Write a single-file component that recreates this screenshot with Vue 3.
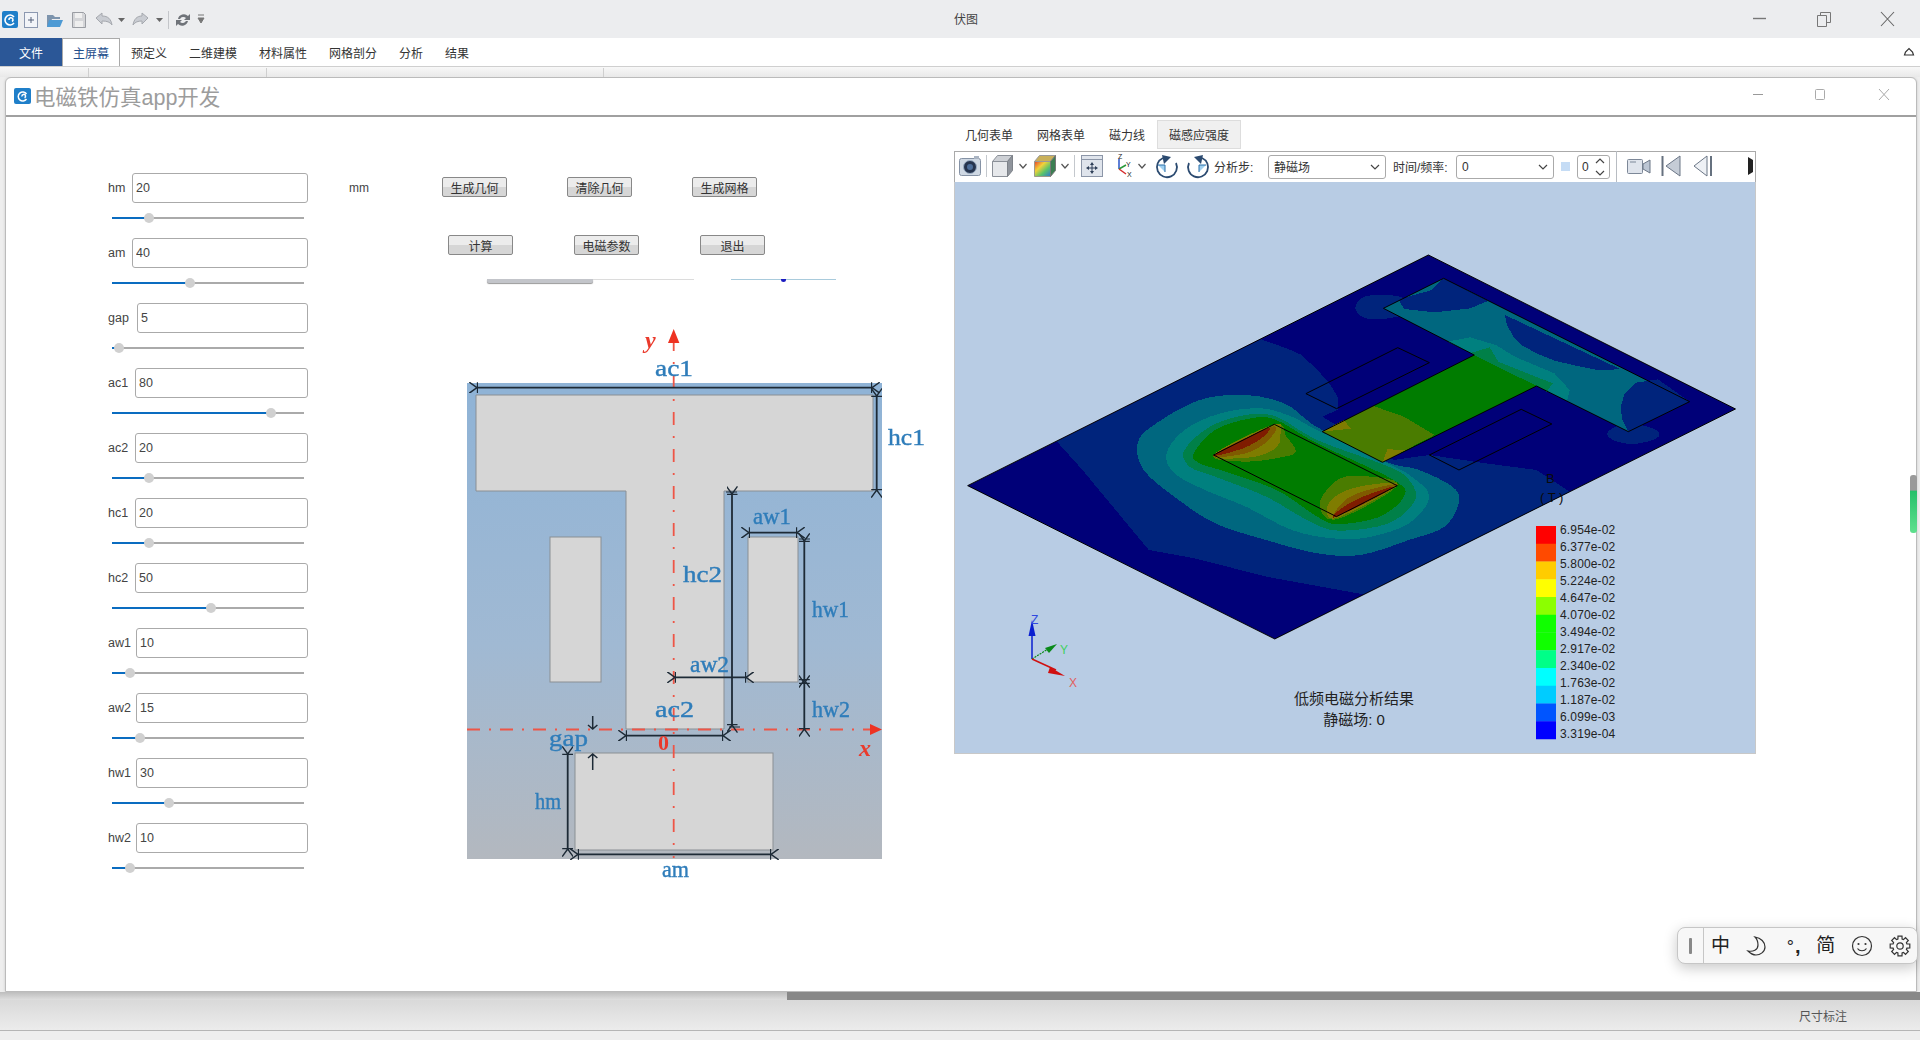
<template>
  <div class="app">
    <!-- title bar -->
    <header class="titlebar">
      <svg class="quick" viewBox="0 0 210 38" width="210" height="38">
        <rect x="2" y="11" width="16" height="17" rx="2" fill="#1f7fc9" />
        <path d="M14 17a5 5 0 1 0 0 6M9 20a2 2 0 1 1 3 1.5" fill="none" stroke="#fff" stroke-width="1.6" />
        <rect x="24.500" y="12.500" width="13" height="15" fill="#f2f4f8" stroke="#8c98b0" />
        <path d="M31 17v6M28 20h6" stroke="#55617a" />
        <path d="M47 15h6l2 2h5v2H52l-3 8h-2z" fill="#7d94ad" />
        <path d="M49 20h14l-3 7H47z" fill="#4d9ad4" />
        <path d="M72.500 12.500h11l2 2v13h-13z" fill="#d4d5d8" stroke="#9a9da3" />
        <rect x="75" y="13" width="7" height="5" fill="#f0f0f0" />
        <rect x="75" y="21" width="8" height="6" fill="#eee" />
        <path d="M96 18l6-5v3c6 0 9 3 10 9-2-3-5-4-10-4v3z" fill="#c9ccd2" stroke="#a5a8ae" />
        <path d="M118 18h7l-3.500 4z" fill="#666" />
        <path d="M148 18l-6-5v3c-5 0-8 3-9 9 2-3 5-4 9-4v3z" fill="#c9ccd2" stroke="#a5a8ae" />
        <path d="M156 18h7l-3.500 4z" fill="#666" />
        <path d="M168.500 11v18" stroke="#c4c6ca" />
        <path d="M178 19a6 6 0 0 1 10-3l2-2v6h-6l2-2a4 4 0 0 0-6 1zM188 21a6 6 0 0 1-10 3l-2 2v-6h6l-2 2a4 4 0 0 0 6-1z" fill="#6f7379" />
        <path d="M198 15h6M198 18h6l-3 5z" fill="#777" stroke="#777" />
      </svg>
      <span class="app-name">伏图</span>
      <div class="win-btns">
        <svg viewBox="0 0 168 38" width="168" height="38">
          <path d="M2 18.500h13" stroke="#777" stroke-width="1.400" />
          <path d="M66.500 15.500h9v11h-9zM69.500 15.500v-3h10v10h-4" fill="none" stroke="#777" />
          <path d="M130 12l13 14M143 12l-13 14" stroke="#666" stroke-width="1.100" />
        </svg>
      </div>
    </header>

    <!-- menu -->
    <nav class="menubar">
      <div class="file-tab">文件</div>
      <div class="home-tab">主屏幕</div>
      <div v-for="m in menus" :key="m" class="menu-item">{{ m }}</div>
      <svg class="collapse" viewBox="0 0 12 12" width="12" height="12">
        <path d="M1.500 9h9l-1-3-3.500-3.500L2.500 6z" fill="none" stroke="#333" stroke-width="1.200" />
      </svg>
    </nav>
    <div class="ribbon">
      <i class="tick t1"></i><i class="tick t2"></i><i class="tick t3"></i>
    </div>

    <!-- app window -->
    <section class="window">
      <div class="win-title">
        <svg viewBox="0 0 18 18" width="18" height="18">
          <rect x="0" y="1" width="17" height="16" rx="2" fill="#1f7fc9" />
          <path d="M12.500 7a4.500 4.500 0 1 0 0 5M8 9.500a1.800 1.800 0 1 1 2.500 1.300" fill="none" stroke="#fff" stroke-width="1.500" />
        </svg>
        <span class="win-name">电磁铁仿真app开发</span>
        <div class="win-btns2">
          <svg viewBox="0 0 140 18" width="140" height="18">
            <path d="M0 9.500h10" stroke="#999" />
            <rect x="62.500" y="4.500" width="9" height="10" rx="1" fill="none" stroke="#aaa" />
            <path d="M126 4l10 11M136 4l-10 11" stroke="#aaa" />
          </svg>
        </div>
      </div>

      <div class="win-body">
        <!-- parameters -->
        <div class="params">
          <div v-for="p in params" :key="p.name" class="param">
            <div class="param-top">
              <label class="param-label" :style="{ width: p.labelW + 'px' }">{{ p.name }}</label>
              <input class="param-input" :value="p.value" readonly />
            </div>
            <div class="slider">
              <div class="slider-fill" :style="{ width: p.pos + 'px' }"></div>
              <div class="slider-thumb" :style="{ left: p.pos - 5 + 'px' }"></div>
            </div>
          </div>
        </div>

        <!-- actions + sketch -->
        <div class="middle">
          <div class="btn-row first">
            <span class="unit">mm</span>
            <button v-for="b in btnsA" :key="b" class="btn">{{ b }}</button>
          </div>
          <div class="btn-row second">
            <button v-for="b in btnsB" :key="b" class="btn">{{ b }}</button>
          </div>
          <div class="cut-strip">
            <div class="cut-bar"></div>
            <div class="cut-line"></div>
            <div class="cut-blue"><i></i></div>
          </div>

          <svg class="sketch" viewBox="450 320 500 570" width="500" height="570">
            <defs>
              <linearGradient id="skbg" x1="0" y1="0" x2="0" y2="1">
                <stop offset="0" stop-color="#8fb3d6" />
                <stop offset="0.55" stop-color="#a0b9d3" />
                <stop offset="1" stop-color="#b3b8bf" />
              </linearGradient>
              <marker id="dimEnd" viewBox="0 0 10 10" refX="1" refY="5" markerWidth="11" markerHeight="11" markerUnits="userSpaceOnUse" orient="auto-start-reverse">
                <path d="M8 0L1 5l7 5M0.500 0v10" fill="none" stroke="#1d2a36" stroke-width="1.300" />
              </marker>
            </defs>
            <g class="soft">
              <rect x="467" y="383" width="415" height="476" fill="url(#skbg)" />
              <path d="M476 395H873V491H724V729H626V491H476Z" fill="#d6d6d6" stroke="#8a8f94" />
              <rect x="550" y="537" width="51" height="145" fill="#d6d6d6" stroke="#8a8f94" />
              <rect x="748" y="537" width="50" height="145" fill="#d6d6d6" stroke="#8a8f94" />
              <rect x="575" y="753" width="198" height="97" fill="#d6d6d6" stroke="#8a8f94" />

              <path d="M673.700 338V858" stroke="#ee5546" stroke-width="1.800" stroke-dasharray="13 11 2 11" fill="none" />
              <path d="M467 729.500H872" stroke="#ee5546" stroke-width="1.800" stroke-dasharray="13 9 2 9" fill="none" />
              <path d="M668 343l5.700-14 5.700 14zM870 724l12 5.500-12 5.500z" fill="#ee3322" />

              <g class="dims">
                <line v-for="(d, i) in dims" :key="i" :x1="d[0]" :y1="d[1]" :x2="d[2]" :y2="d[3]" marker-start="url(#dimEnd)" marker-end="url(#dimEnd)" />
                <path d="M726 492h11M729 727h11M799 539h11" stroke-width="1.200" />
                <path d="M592.700 716v12M588 725l4.700 4 4.700-4M592.700 770v-15M588 758l4.700-4 4.700 4" fill="none" stroke-width="1.500" />
              </g>

              <text v-for="l in sketchLabels" :key="l.t" class="sk-label" :x="l.x" :y="l.y" :textLength="l.w" lengthAdjust="spacingAndGlyphs">{{ l.t }}</text>
              <text class="sk-red" x="645" y="348">y</text>
              <text class="sk-red" x="859" y="756">x</text>
              <text class="sk-zero" x="658" y="750">0</text>
            </g>
          </svg>
        </div>

        <!-- result panel -->
        <div class="result">
          <div class="tabs">
            <span v-for="t in tabs" :key="t" class="tab">{{ t }}</span>
            <span class="tab active">磁感应强度</span>
          </div>

          <div class="toolbar">
            <svg class="tb-left" viewBox="955 151 258 31" width="258" height="31">
              <defs>
                <linearGradient id="rainbow" x1="0" y1="0" x2="1" y2="1">
                  <stop offset="0" stop-color="#e8402a" />
                  <stop offset="0.35" stop-color="#f2d23a" />
                  <stop offset="0.65" stop-color="#59c46a" />
                  <stop offset="1" stop-color="#2f76d6" />
                </linearGradient>
              </defs>
              <rect x="959.500" y="158.500" width="21" height="17" rx="2" fill="#cfd8e3" stroke="#8592a5" />
              <rect x="974" y="156" width="5" height="3" fill="#aab4c2" />
              <circle cx="970" cy="167" r="6.500" fill="#26344e" stroke="#9db0c6" />
              <circle cx="970" cy="167" r="3" fill="#4d6e9a" />
              <path d="M986.500 155v22M1074.500 155v22" stroke="#c4c8cd" />

              <path d="M992.500 161.500h15v15h-15z" fill="#e6e8eb" stroke="#8b9098" />
              <path d="M992.500 161.500l5-6h15l-5 6z" fill="#cdd0d5" stroke="#8b9098" />
              <path d="M1007.500 161.500l5-6v15l-5 6z" fill="#8f949c" stroke="#7d8289" />
              <path d="M1019.500 164l3.500 4 3.500-4M1061.500 164l3.500 4 3.500-4M1138.500 164l3.500 4 3.500-4" fill="none" stroke="#555" stroke-width="1.200" />

              <path d="M1034.500 161.500h16v15h-16z" fill="url(#rainbow)" stroke="#9a9a8a" />
              <path d="M1034.500 161.500l5-6h16l-5 6z" fill="#c9b05a" stroke="#999" />
              <path d="M1050.500 161.500l5-6v15l-5 6z" fill="#3b7e52" stroke="#777" />

              <rect x="1081.500" y="155.500" width="21" height="21" fill="#dfe4ec" stroke="#8c96a8" />
              <path d="M1082 159.500h20" stroke="#8c96a8" />
              <path d="M1092 164v8M1088 168h8" stroke="#2e3f58" />
              <path d="M1092 162l-2 3h4zM1092 174l-2-3h4zM1086 168l3-2v4zM1098 168l-3-2v4z" fill="#2e3f58" />

              <path d="M1119 169v-10" stroke="#2a55c8" stroke-width="1.500" />
              <path d="M1119 169l7-4" stroke="#2a9a3a" stroke-width="1.500" />
              <path d="M1119 169l7 5" stroke="#d62a2a" stroke-width="1.500" />
              <text class="tb-axis" x="1118" y="159">Z</text>
              <text class="tb-axis" x="1126" y="167">Y</text>
              <text class="tb-axis" x="1127" y="177">X</text>

              <path d="M1163 158a10 10 0 1 0 13 5" fill="none" stroke="#2b4a70" stroke-width="1.800" />
              <path d="M1162 155l9 2-7 7z" fill="#2b4a70" />
              <path d="M1158 165h7v7" fill="#9fd0f0" stroke="#2b6ea8" />
              <path d="M1202 158a10 10 0 1 1-13 5" fill="none" stroke="#2b4a70" stroke-width="1.800" />
              <path d="M1203 155l-9 2 7 7z" fill="#2b4a70" />
              <path d="M1206 165h-7v7" fill="#9fd0f0" stroke="#2b6ea8" />
            </svg>
            <span class="tb-text step-label">分析步:</span>
            <div class="combo combo-a"><span>静磁场</span><svg viewBox="0 0 10 6" width="10" height="6"><path d="M1 1l4 4 4-4" fill="none" stroke="#444" stroke-width="1.200" /></svg></div>
            <span class="tb-text freq-label">时间/频率:</span>
            <div class="combo combo-b"><span>0</span><svg viewBox="0 0 10 6" width="10" height="6"><path d="M1 1l4 4 4-4" fill="none" stroke="#444" stroke-width="1.200" /></svg></div>
            <i class="blue-sq"></i>
            <div class="spin">
              <span>0</span>
              <svg viewBox="0 0 10 22" width="10" height="22"><path d="M1 7l4-4 4 4M1 15l4 4 4-4" fill="none" stroke="#444" stroke-width="1.200" /></svg>
            </div>
            <svg class="tb-right" viewBox="1616 151 140 31" width="140" height="31">
              <path d="M1617.500 151v31" stroke="#b8bcc2" />
              <rect x="1628.500" y="159.500" width="15" height="14" rx="1" fill="#dfe4ec" stroke="#7d8898" />
              <path d="M1631 162h6" stroke="#7d8898" />
              <path d="M1644 164l7-4v13l-7-4z" fill="#bcc6d4" stroke="#6b7686" />
              <path d="M1663.500 156v20" stroke="#66717f" stroke-width="2" />
              <path d="M1681 156v20l-14-10z" fill="#c5ccd6" stroke="#6b7686" />
              <path d="M1708 156v20l-13-10z" fill="#eef1f5" stroke="#6b7686" />
              <path d="M1712 156v20" stroke="#66717f" stroke-width="2" />
              <path d="M1749 157l5 3v6h-5zM1749 175l5-3v-6h-5z" fill="#222" />
            </svg>
          </div>

          <div class="viewport">
            <svg viewBox="954 182 802 572" width="802" height="572">
              <defs>
                <clipPath id="plateClip"><polygon points="918,45 1520,507 617,1197 15,737" /></clipPath>
              </defs>
              <g transform="translate(960 240) scale(0.5102 0.3333)" shape-rendering="crispEdges">
                <g clip-path="url(#plateClip)">
                  <polygon points="918,45 1520,507 617,1197 15,737" fill="#000078" />
                  <path v-for="(c, i) in contours" :key="i" :d="shape(c)" :fill="c.fill" />
                </g>
                <g class="outlines" shape-rendering="auto">
                  <polygon points="918,45 1520,507 617,1197 15,737" />
                  <polygon points="948,115 1430,485 1310,575 1130,438 828,667 710,575 1008,345 830,205" />
                  <polygon points="616,553 857,737 738,830 497,645" />
                  <polygon points="858,323 920,368 738,506 678,461" />
                  <polygon points="1100,508 1160,552 978,690 920,645" />
                </g>
              </g>

              <!-- triad -->
              <path d="M1032 659V626" stroke="#0a1fd0" stroke-width="1.500" />
              <path d="M1032 620l-3.500 16h7z" fill="#0a1fd0" />
              <path d="M1032 659l16-10" stroke="#0a8a1a" stroke-width="1.200" stroke-dasharray="2 1" />
              <path d="M1057 644l-12 4 4 5z" fill="#0a8a1a" />
              <path d="M1032 659l24 11" stroke="#d01010" stroke-width="1.500" />
              <path d="M1065 676l-15-9-2 6z" fill="#d01010" />
              <text class="axis az" x="1031" y="624">Z</text>
              <text class="axis ay" x="1060" y="654">Y</text>
              <text class="axis ax" x="1069" y="687">X</text>

              <!-- legend -->
              <rect v-for="(c, i) in legendColors" :key="c + i" x="1536" :y="526 + i * 17.750" width="20" height="18" :fill="c" />
              <text v-for="(v, i) in legendValues" :key="v" class="legend-text" x="1560" :y="534 + i * 17">{{ v }}</text>
              <text class="legend-unit" x="1546" y="483">B</text>
              <text class="legend-unit" x="1540" y="502">( T )</text>

              <text class="caption" x="1354" y="704">低频电磁分析结果</text>
              <text class="caption" x="1354" y="725">静磁场: 0</text>
            </svg>
          </div>
        </div>
      </div>
    </section>

    <div class="shadow-band"><i></i></div>
    <footer class="statusbar"><span>尺寸标注</span></footer>

    <!-- scroll handle & IME overlay -->
    <div class="green-pill"></div>
    <div class="ime">
      <div class="ime-grip"><i></i></div>
      <div class="ime-items">
        <span class="ime-cn">中</span>
        <svg viewBox="0 0 22 22" width="22" height="22"><path d="M9 2c6 1 10 5 10 10 0 5-5 8-9 8-4 0-6-2-8-4 5 1 10-1 10-6 0-3-1-6-3-8z" fill="none" stroke="#333" stroke-width="1.200" /></svg>
        <span class="ime-dot">°<b>,</b></span>
        <span class="ime-cn">简</span>
        <svg viewBox="0 0 22 22" width="22" height="22"><circle cx="11" cy="11" r="9.500" fill="none" stroke="#333" stroke-width="1.200" /><circle cx="7.500" cy="9" r="1.100" fill="#333" /><circle cx="14.500" cy="9" r="1.100" fill="#333" /><path d="M6.500 13.500c2 3 7 3 9 0" fill="none" stroke="#333" stroke-width="1.200" /></svg>
        <svg viewBox="0 0 22 22" width="22" height="22"><path :d="gear" fill="none" stroke="#333" stroke-width="1.200" /><circle cx="11" cy="11" r="3.200" fill="none" stroke="#333" stroke-width="1.200" /></svg>
      </div>
    </div>
  </div>
</template>

<script setup>
const menus = ['预定义', '二维建模', '材料属性', '网格剖分', '分析', '结果']
const tabs = ['几何表单', '网格表单', '磁力线']
const btnsA = ['生成几何', '清除几何', '生成网格']
const btnsB = ['计算', '电磁参数', '退出']

const params = [
  { name: 'hm', value: '20', labelW: 24, pos: 37 },
  { name: 'am', value: '40', labelW: 24, pos: 78 },
  { name: 'gap', value: '5', labelW: 29, pos: 7 },
  { name: 'ac1', value: '80', labelW: 27, pos: 159 },
  { name: 'ac2', value: '20', labelW: 27, pos: 37 },
  { name: 'hc1', value: '20', labelW: 27, pos: 37 },
  { name: 'hc2', value: '50', labelW: 27, pos: 99 },
  { name: 'aw1', value: '10', labelW: 28, pos: 18 },
  { name: 'aw2', value: '15', labelW: 28, pos: 28 },
  { name: 'hw1', value: '30', labelW: 28, pos: 57 },
  { name: 'hw2', value: '10', labelW: 28, pos: 18 },
]

// x1 y1 x2 y2 in page pixels
const dims = [
  [477, 387.7, 872, 387.7],
  [876.7, 396, 876.7, 490],
  [732, 494, 732, 725],
  [749, 532.7, 797, 532.7],
  [804.3, 541, 804.3, 680],
  [804.3, 683, 804.3, 729],
  [675, 677.3, 746, 677.3],
  [626, 735.7, 723, 735.7],
  [567.7, 754, 567.7, 849],
  [578, 854.3, 771, 854.3],
]

const sketchLabels = [
  { t: 'ac1', x: 655, y: 376, w: 38 },
  { t: 'hc1', x: 888, y: 445, w: 37 },
  { t: 'hc2', x: 683, y: 582, w: 39 },
  { t: 'aw1', x: 753, y: 524, w: 38 },
  { t: 'hw1', x: 812, y: 617, w: 37 },
  { t: 'aw2', x: 690, y: 672, w: 39 },
  { t: 'ac2', x: 655, y: 717, w: 39 },
  { t: 'hw2', x: 812, y: 717, w: 38 },
  { t: 'gap', x: 549, y: 746, w: 39 },
  { t: 'hm', x: 535, y: 809, w: 26 },
  { t: 'am', x: 662, y: 877, w: 27 },
]

const legendColors = ['#ff0000', '#ff4a00', '#ffcc00', '#ffff00', '#8cff00', '#10ff00', '#10ff00', '#00ff88', '#00ffff', '#00ccff', '#0055ff', '#0000ff']
const legendValues = ['6.954e-02', '6.377e-02', '5.800e-02', '5.224e-02', '4.647e-02', '4.070e-02', '3.494e-02', '2.917e-02', '2.340e-02', '1.763e-02', '1.187e-02', '6.099e-03', '3.319e-04']

// contour bands of the field plot, painted back to front
const contours = [
  { fill: '#00247c', poly: true, pts: [[190, 605], [590, 298], [640, 325], [670, 345], [700, 390], [722, 425], [740, 470], [740, 510], [710, 530], [850, 660], [920, 645], [1030, 670], [1130, 690], [1200, 760], [790, 1063], [600, 1010], [460, 955], [370, 930], [240, 690]] },
  { fill: '#00247c', pts: [[775, 205], [790, 172], [830, 165], [870, 175], [880, 215], [840, 235], [795, 235]] },
  { fill: '#00247c', pts: [[1270, 575], [1310, 550], [1365, 570], [1365, 595], [1320, 612], [1280, 600]] },

  { fill: '#00677f', poly: true, pts: [[948, 115], [1430, 485], [1310, 575], [1130, 438], [1008, 345], [830, 205]] },
  { fill: '#00247c', poly: true, pts: [[948, 115], [1035, 183], [1000, 205], [930, 217], [870, 207], [860, 178], [925, 150]] },
  { fill: '#00247c', poly: true, pts: [[1068, 225], [1295, 388], [1250, 390], [1210, 378], [1165, 362], [1130, 340], [1100, 315], [1085, 290], [1072, 255]] },
  { fill: '#00247c', poly: true, pts: [[1430, 485], [1310, 575], [1298, 540], [1295, 500], [1303, 460], [1325, 428], [1368, 418]] },
  { fill: '#00807f', poly: true, pts: [[955, 305], [1000, 292], [1050, 315], [1090, 352], [1165, 400], [1195, 450], [1190, 482], [1130, 438], [1008, 345]] },
  { fill: '#008048', poly: true, pts: [[1003, 338], [1038, 322], [1055, 365], [1120, 405], [1162, 430], [1150, 455], [1130, 438], [1008, 345]] },

  { fill: '#00677f', pts: [[348, 610], [380, 555], [470, 480], [560, 465], [635, 490], [680, 540], [710, 570], [835, 665], [900, 690], [965, 740], [978, 785], [950, 860], [880, 900], [785, 945], [700, 940], [600, 900], [500, 850], [420, 770], [360, 690]] },
  { fill: '#00807f', pts: [[405, 640], [440, 570], [510, 520], [590, 505], [650, 530], [700, 570], [835, 668], [885, 710], [920, 770], [880, 850], [800, 892], [730, 895], [650, 870], [560, 800], [480, 750], [420, 700]] },
  { fill: '#008048', pts: [[440, 630], [490, 560], [560, 525], [620, 530], [700, 600], [840, 680], [880, 720], [892, 780], [840, 850], [740, 872], [680, 840], [600, 770], [500, 710], [450, 680]] },
  { fill: '#007c00', pts: [[458, 640], [500, 570], [570, 535], [620, 540], [700, 610], [850, 720], [870, 770], [820, 832], [740, 852], [700, 830], [620, 750], [520, 695], [470, 670]] },

  { fill: '#007c00', poly: true, pts: [[1008, 345], [1130, 438], [828, 667], [710, 575]] },
  { fill: '#4a7c00', poly: true, pts: [[810, 498], [870, 530], [930, 585], [828, 667], [710, 575]] },
  { fill: '#7f7c00', poly: true, pts: [[710, 575], [752, 540], [766, 566]] },
  { fill: '#7f7c00', poly: true, pts: [[828, 667], [838, 628], [875, 630]] },

  { fill: '#007c00', poly: true, pts: [[616, 553], [857, 737], [738, 830], [497, 645]] },
  { fill: '#4a7c00', pts: [[497, 645], [560, 665], [630, 652], [658, 635], [640, 590], [616, 553]] },
  { fill: '#7f7c00', pts: [[497, 645], [570, 652], [618, 625], [628, 585], [616, 553]] },
  { fill: '#7f5a00', pts: [[497, 645], [560, 640], [605, 600], [612, 560]] },
  { fill: '#7f1c00', pts: [[497, 645], [555, 625], [595, 590], [600, 566]] },
  { fill: '#4a7c00', pts: [[738, 838], [857, 737], [790, 708], [740, 720], [705, 790]] },
  { fill: '#7f7c00', pts: [[738, 834], [857, 737], [800, 735], [745, 760], [720, 800]] },
  { fill: '#7f5a00', pts: [[738, 830], [857, 737], [800, 750], [755, 780]] },
  { fill: '#7f1c00', pts: [[738, 830], [850, 742], [790, 770], [745, 808]] },
]

// closed Catmull-Rom curve through the points, or straight edges for poly
const shape = (c) => {
  const p = c.pts
  if (c.poly) return 'M' + p.map((q) => q.join(' ')).join('L') + 'Z'
  const n = p.length
  let d = `M${p[0][0]} ${p[0][1]}`
  for (let i = 0; i < n; i++) {
    const a = p[(i - 1 + n) % n]
    const b = p[i]
    const e = p[(i + 1) % n]
    const f = p[(i + 2) % n]
    d += `C${b[0] + (e[0] - a[0]) / 6} ${b[1] + (e[1] - a[1]) / 6} ${e[0] - (f[0] - b[0]) / 6} ${e[1] - (f[1] - b[1]) / 6} ${e[0]} ${e[1]}`
  }
  return d + 'Z'
}

const gear = (() => {
  let d = ''
  for (let i = 0; i < 8; i++) {
    const t = (i * Math.PI) / 4
    const pts = [[-0.3, 7.2], [-0.2, 10], [0.2, 10], [0.3, 7.2]]
    pts.forEach(([o, r], k) => {
      const x = (11 + r * Math.cos(t + o)).toFixed(1)
      const y = (11 + r * Math.sin(t + o)).toFixed(1)
      d += `${i === 0 && k === 0 ? 'M' : 'L'}${x} ${y}`
    })
  }
  return d + 'Z'
})()
</script>

<style scoped>
.app { position: relative; width: 1920px; height: 1040px; overflow: hidden; background: #eeeeee; font-family: "Liberation Sans", "Noto Sans CJK SC", sans-serif; color: #333; }

.titlebar { position: relative; display: flex; height: 38px; background: #ecedef; }
.quick { display: block; }
.app-name { position: absolute; left: 954px; top: 10px; font-size: 12px; color: #444; }
.win-btns { margin-left: auto; margin-right: 1px; }

.menubar { position: relative; display: flex; align-items: stretch; height: 28px; background: #fff; font-size: 12px; }
.file-tab { width: 62px; background: #2b5797; color: #fff; display: flex; align-items: center; justify-content: center; }
.home-tab { width: 58px; border: 1px solid #aaa; border-bottom: none; box-sizing: border-box; color: #1f4e8c; display: flex; align-items: center; justify-content: center; margin-right: 11px; }
.menu-item { display: flex; align-items: center; margin-right: 22px; color: #333; }
.collapse { position: absolute; right: 5px; top: 8px; }

.ribbon { position: relative; height: 11px; background: linear-gradient(#f8f8f8, #e9e9e9); border-top: 1px solid #cfcfcf; box-sizing: border-box; }
.tick { position: absolute; top: 1px; bottom: 0; width: 1px; background: #cfcfcf; }
.t1 { left: 88px; }
.t2 { left: 266px; }
.t3 { left: 603px; }

.window { height: 915px; margin: 0 3px 0 5px; background: #fff; border: 1px solid #bbb; border-radius: 6px 6px 0 0; box-sizing: border-box; box-shadow: 0 0 3px rgba(0, 0, 0, 0.15); }
.win-title { display: flex; align-items: center; height: 39px; padding-left: 8px; padding-bottom: 2px; border-bottom: 2px solid #a0a0a0; box-sizing: border-box; }
.win-name { margin-left: 2px; font-size: 21.500px; color: #9c9c9c; }
.win-btns2 { margin-left: auto; margin-right: 23px; }

.win-body { display: flex; height: 873px; }

.params { width: 334px; padding: 56px 0 0 102px; box-sizing: border-box; }
.param { height: 65px; }
.param-top { display: flex; align-items: center; height: 30px; font-size: 12.500px; color: #444; }
.param-label { flex: none; }
.param-input { flex: 1; width: 0; height: 30px; margin-right: 32px; padding: 0 0 0 3px; box-sizing: border-box; border: 1px solid #aaa; border-radius: 3px; font: 12.500px "Liberation Sans", sans-serif; color: #444; outline: none; }
.slider { position: relative; height: 2px; width: 192px; margin: 14px 0 0 4px; background: #aaa; }
.slider-fill { height: 2px; background: #0a6cc0; }
.slider-thumb { position: absolute; top: -4px; width: 10px; height: 10px; border-radius: 50%; background: #d0d0d0; }

.middle { width: 610px; padding-top: 60px; box-sizing: border-box; }
.btn-row { display: flex; align-items: center; font-size: 12px; }
.btn-row.first { padding-left: 8px; gap: 60px; }
.btn-row.second { padding-left: 108px; gap: 61px; margin-top: 38px; }
.unit { width: 34px; margin-left: 1px; margin-right: -1px; padding-top: 1px; color: #444; }
.btn { width: 65px; height: 20px; padding: 0; border: 1px solid #888; border-radius: 2px; background: linear-gradient(#ececec 50%, #d6d6d6 50%); font: 12px "Liberation Sans", "Noto Sans CJK SC", sans-serif; color: #333; }

.cut-strip { display: flex; align-items: flex-start; height: 4px; margin: 24px 0 0 147px; }
.cut-bar { width: 106px; height: 4px; background: #c3c5ca; border-radius: 0 0 2px 2px; box-shadow: 0 1px 1px #999; }
.cut-line { width: 101px; height: 1px; background: #dcdcdc; }
.cut-blue { position: relative; width: 105px; height: 1px; margin-left: 37px; background: #a9cbdc; }
.cut-blue i { position: absolute; left: 50px; top: 0; width: 5px; height: 3px; border-radius: 0 0 3px 3px; background: #1a1ac0; }

.sketch { display: block; margin: 37px 0 0 110px; }
.soft { filter: blur(0.5px); }
.dims { stroke: #1d2a36; fill: none; }
.dims line { stroke-width: 1.800; }
.sk-label { font: 23px "Liberation Serif", serif; fill: #2f7dba; stroke: #2f7dba; stroke-width: 0.400px; }
.sk-red { font: italic bold 24px "Liberation Serif", serif; fill: #ea3a2c; }
.sk-zero { font: bold 22px "Liberation Serif", serif; fill: #ea3a2c; }

.result { width: 802px; margin-left: 4px; padding-top: 3px; }
.tabs { display: flex; align-items: center; height: 29px; font-size: 12px; color: #333; margin-bottom: 2px; }
.tab { margin-left: 11px; margin-right: 13px; }
.tab.active { display: flex; align-items: center; justify-content: center; align-self: stretch; width: 84px; margin: 0 0 0 -1px; background: #f0f0f0; border: 1px solid #ddd; box-sizing: border-box; }

.toolbar { display: flex; align-items: center; height: 31px; padding-bottom: 1px; border: 1px solid #aaa; border-bottom: none; box-sizing: border-box; font-size: 12px; color: #333; background: #fff; }
.tb-left { flex: none; margin-left: 0; }
.tb-axis { font: 7px "Liberation Sans", sans-serif; fill: #222; }
.tb-text { flex: none; }
.combo { display: flex; align-items: center; justify-content: space-between; height: 24px; padding: 0 5px; box-sizing: border-box; border: 1px solid #aaa; border-radius: 3px; flex: none; }
.step-label { margin-left: 1px; width: 54px; }
.combo-a { width: 118px; }
.freq-label { margin-left: 7px; width: 63px; }
.combo-b { width: 98px; }
.blue-sq { flex: none; width: 9px; height: 9px; margin: 0 7px; background: #c5dcf5; }
.spin { display: flex; align-items: center; justify-content: space-between; flex: none; width: 33px; height: 24px; padding: 0 4px; box-sizing: border-box; border: 1px solid #aaa; border-radius: 3px; }
.tb-right { flex: none; margin-left: 5px; }

.viewport { height: 572px; background: #b8cce4; border: 1px solid #c8c8c8; border-top: none; box-sizing: border-box; overflow: hidden; }
.viewport svg { display: block; margin-left: -1px; }
.outlines polygon { fill: none; stroke: #000; stroke-width: 1; vector-effect: non-scaling-stroke; }
.legend-text { font: 12px "Liberation Sans", sans-serif; fill: #222; letter-spacing: 0.150px; }
.legend-unit { font: 13px "Liberation Sans", sans-serif; fill: #0a0a0a; }
.caption { font: 15px "Liberation Sans", "Noto Sans CJK SC", sans-serif; fill: #222; text-anchor: middle; }
.axis { font: 12px "Liberation Sans", sans-serif; }
.az { fill: #3048e0; }
.ay { fill: #40d060; }
.ax { fill: #e06060; }

.shadow-band { display: flex; justify-content: flex-end; height: 8px; background: linear-gradient(#bdbdbd, #dedede); }
.shadow-band i { display: block; width: 1133px; background: #888; }
.statusbar { display: flex; align-items: center; justify-content: flex-end; height: 31px; padding-right: 73px; box-sizing: border-box; background: linear-gradient(#d9d9d9, #ececec); border-bottom: 1px solid #b5b5b5; font-size: 12px; color: #555; }

.green-pill { position: absolute; left: 1910px; top: 475px; width: 7px; height: 58px; border-radius: 3px; background: linear-gradient(#9a9a9a 26%, #25c06a 28%, #5fe08e); }

.ime { position: absolute; left: 1677px; top: 927px; display: flex; width: 241px; height: 37px; background: #f7f7f7; border: 1px solid #c6c6c6; border-radius: 8px; box-sizing: border-box; box-shadow: 0 4px 14px rgba(0, 0, 0, 0.22); color: #222; }
.ime-grip { display: flex; align-items: center; justify-content: center; width: 25px; border-right: 1px solid #c6c6c6; }
.ime-grip i { width: 3px; height: 16px; background: #888; border-radius: 1px; }
.ime-items { flex: 1; display: flex; align-items: center; justify-content: space-between; padding: 0 6px 0 7px; }
.ime-cn { font-size: 19px; line-height: 1; }
.ime-dot { font-size: 18px; line-height: 1; margin-left: 3px; }
.ime-dot b { font-size: 20px; margin-left: 1px; }
</style>
